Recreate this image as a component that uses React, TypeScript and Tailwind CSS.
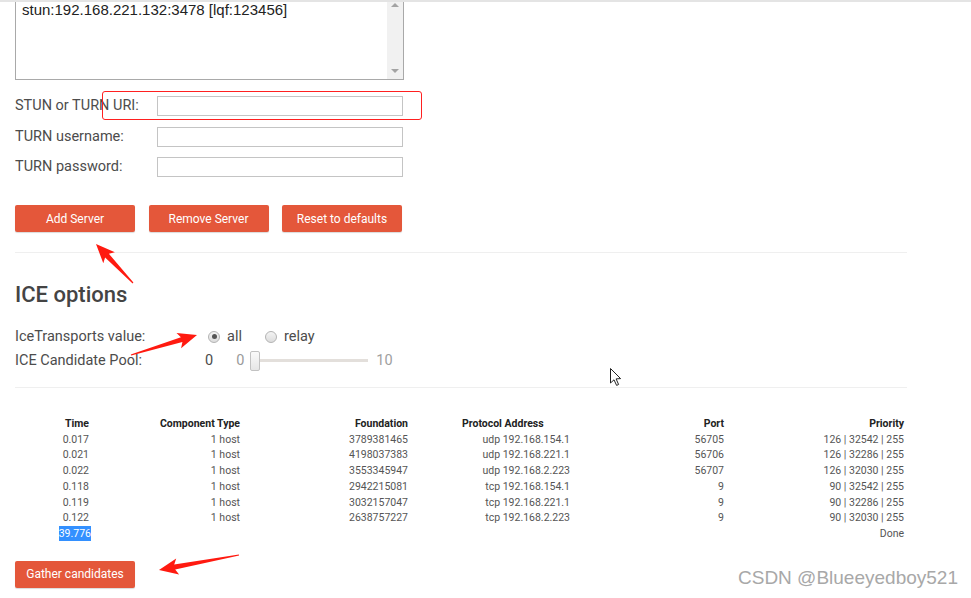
const rows = [
    ["0.017", "1 host", "3789381465", "udp 192.168.154.1", "56705", "126 | 32542 | 255"],
    ["0.021", "1 host", "4198037383", "udp 192.168.221.1", "56706", "126 | 32286 | 255"],
    ["0.022", "1 host", "3553345947", "udp 192.168.2.223", "56707", "126 | 32030 | 255"],
    ["0.118", "1 host", "2942215081", "tcp 192.168.154.1", "9", "90 | 32542 | 255"],
    ["0.119", "1 host", "3032157047", "tcp 192.168.221.1", "9", "90 | 32286 | 255"],
    ["0.122", "1 host", "2638757227", "tcp 192.168.2.223", "9", "90 | 32030 | 255"],
];

const gridCols = "grid grid-cols-[74px_151px_168px_162px_154px_180px]";

// red annotation arrow, tail -> tip
function arrowPoints(tx: number, ty: number, px: number, py: number) {
    const dx = px - tx;
    const dy = py - ty;
    const len = Math.hypot(dx, dy);
    const ux = dx / len;
    const uy = dy / len;
    const nx = -uy;
    const ny = ux;
    const headLen = 16;
    const headW = 8;
    const neckW = 2.6;
    const tailW = 0.6;
    const bx = px - ux * headLen;
    const by = py - uy * headLen;
    const pts = [
        [px, py],
        [bx - ux * 3 + nx * headW, by - uy * 3 + ny * headW],
        [bx + nx * neckW, by + ny * neckW],
        [tx + nx * tailW, ty + ny * tailW],
        [tx - nx * tailW, ty - ny * tailW],
        [bx - nx * neckW, by - ny * neckW],
        [bx - ux * 3 - nx * headW, by - uy * 3 - ny * headW],
    ];
    return pts.map((p) => `${p[0].toFixed(1)},${p[1].toFixed(1)}`).join(" ");
}

function TextField({ label }: { label: string }) {
    return (
        <div className="flex h-[30.5px] items-center">
            <span className="w-[142px] text-[14.5px] text-[#4c4c4c]">{label}</span>
            <div className="h-[20px] w-[246px] border border-[#c4c4c4] bg-white" />
        </div>
    );
}

function OrangeButton({ children }: { children: string }) {
    return (
        <div className="flex h-[27px] w-[120px] items-center justify-center rounded-[2px] bg-[#e4573a] text-[12px] text-white shadow-[0_1px_1px_rgba(0,0,0,0.15)]">
            {children}
        </div>
    );
}

function Radio({ checked }: { checked?: boolean }) {
    return (
        <span className="flex h-[12px] w-[12px] items-center justify-center rounded-full border border-[#b3b3b3] bg-gradient-to-b from-[#f4f4f4] to-[#dcdcdc]">
            {checked && <span className="h-[5px] w-[5px] rounded-full bg-[#555]" />}
        </span>
    );
}

export default function App() {
    return (
        <main className="relative h-[598px] w-[971px] overflow-hidden bg-white font-['Roboto',sans-serif]">
            <div className="absolute left-0 right-0 top-0 z-10 h-[2px] bg-[#e4e4e4]" />

            <div className="pl-[15px]">
                {/* server list */}
                <div className="mt-[-11px] flex h-[91px] w-[389px] border border-[#a9a9a9] bg-white">
                    <div className="flex-1 pl-[6px] pt-[11px] font-['Liberation_Sans',Arial,sans-serif] text-[15px] leading-[17px] text-[#222]">
                        stun:192.168.221.132:3478 [lqf:123456]
                    </div>
                    <div className="flex w-[16px] flex-col items-center justify-between bg-[#f1f1f1] pb-[6px] pt-[13px]">
                        <span className="h-0 w-0 border-x-[4px] border-b-[4px] border-x-transparent border-b-[#a3a3a3]" />
                        <span className="h-0 w-0 border-x-[4px] border-t-[4px] border-x-transparent border-t-[#a3a3a3]" />
                    </div>
                </div>

                {/* fields */}
                <div className="mt-[11px]">
                    <TextField label="STUN or TURN URI:" />
                    <TextField label="TURN username:" />
                    <TextField label="TURN password:" />
                </div>

                <div className="mt-[22.5px] flex gap-[13.5px]">
                    <OrangeButton>Add Server</OrangeButton>
                    <OrangeButton>Remove Server</OrangeButton>
                    <OrangeButton>Reset to defaults</OrangeButton>
                </div>

                <div className="mt-[20px] h-px w-[892px] bg-[#efefef]" />

                {/* ICE options */}
                <h2 className="mt-[28px] text-[22px] font-medium leading-[28px] text-[#444]">ICE options</h2>

                <div className="mt-[15.5px] flex h-[24px] items-center text-[14.5px] text-[#4c4c4c]">
                    <span className="w-[193px]">IceTransports value:</span>
                    <Radio checked />
                    <span className="ml-[7px]">all</span>
                    <span className="ml-[23px]">
                        <Radio />
                    </span>
                    <span className="ml-[7px]">relay</span>
                </div>
                <div className="flex h-[24px] items-center text-[14.5px] text-[#4c4c4c]">
                    <span className="w-[190px]">ICE Candidate Pool:</span>
                    <span>0</span>
                    <span className="ml-[23px] text-[#9a9a9a]">0</span>
                    <div className="ml-[6px] flex items-center">
                        <span className="h-[20px] w-[10px] rounded-[2px] border border-[#c2c2c2] bg-gradient-to-b from-[#fafafa] to-[#e6e6e6]" />
                        <span className="h-[3px] w-[108px] bg-[#e3dfdb]" />
                    </div>
                    <span className="ml-[8px] text-[#a0a0a0]">10</span>
                </div>

                <div className="mt-[14.5px] h-px w-[892px] bg-[#efefef]" />

                {/* candidates */}
                <div className="mt-[28px] text-right text-[10.5px] leading-[15.7px]">
                    <div className={`${gridCols} font-bold text-[#222]`}>
                        <span>Time</span>
                        <span>Component Type</span>
                        <span>Foundation</span>
                        <span className="pl-[54px] text-left">Protocol Address</span>
                        <span>Port</span>
                        <span>Priority</span>
                    </div>
                    {rows.map((r) => (
                        <div key={r[2]} className={`${gridCols} text-[#555]`}>
                            {r.map((cell, i) => (
                                <span key={i}>{cell}</span>
                            ))}
                        </div>
                    ))}
                    <div className={`${gridCols} text-[#555]`}>
                        <span className="-mr-[2px]">
                            <span className="bg-[#3390ff] py-[1px] text-white">39.776</span>
                        </span>
                        <span />
                        <span />
                        <span />
                        <span />
                        <span>Done</span>
                    </div>
                </div>

                <div className="mt-[19px]">
                    <OrangeButton>Gather candidates</OrangeButton>
                </div>
            </div>

            {/* annotations over the screenshot */}
            <div className="absolute left-[102px] top-[91px] h-[29px] w-[320px] rounded-[3px] border border-[#ff2020]" />
            <svg className="absolute left-0 top-0" width="971" height="598" viewBox="0 0 971 598">
                <polygon points={arrowPoints(133, 283, 96, 244)} fill="#ff1a10" />
                <polygon points={arrowPoints(131, 355, 197, 335)} fill="#ff1a10" />
                <polygon points={arrowPoints(239, 555, 159, 570)} fill="#ff1a10" />
                <path d="M610.5 368.5 L610.5 383 L614 379.8 L616.6 385.4 L618.6 384.5 L616.1 378.9 L620.6 378.6 Z" fill="#fff" stroke="#222" strokeWidth="1" strokeLinejoin="round" />
            </svg>
            <div className="absolute left-[738px] top-[566px] font-['Liberation_Sans',Arial,sans-serif] text-[19px] leading-[24px] text-[#a8a8a8]">
                CSDN @Blueeyedboy521
            </div>
        </main>
    );
}
